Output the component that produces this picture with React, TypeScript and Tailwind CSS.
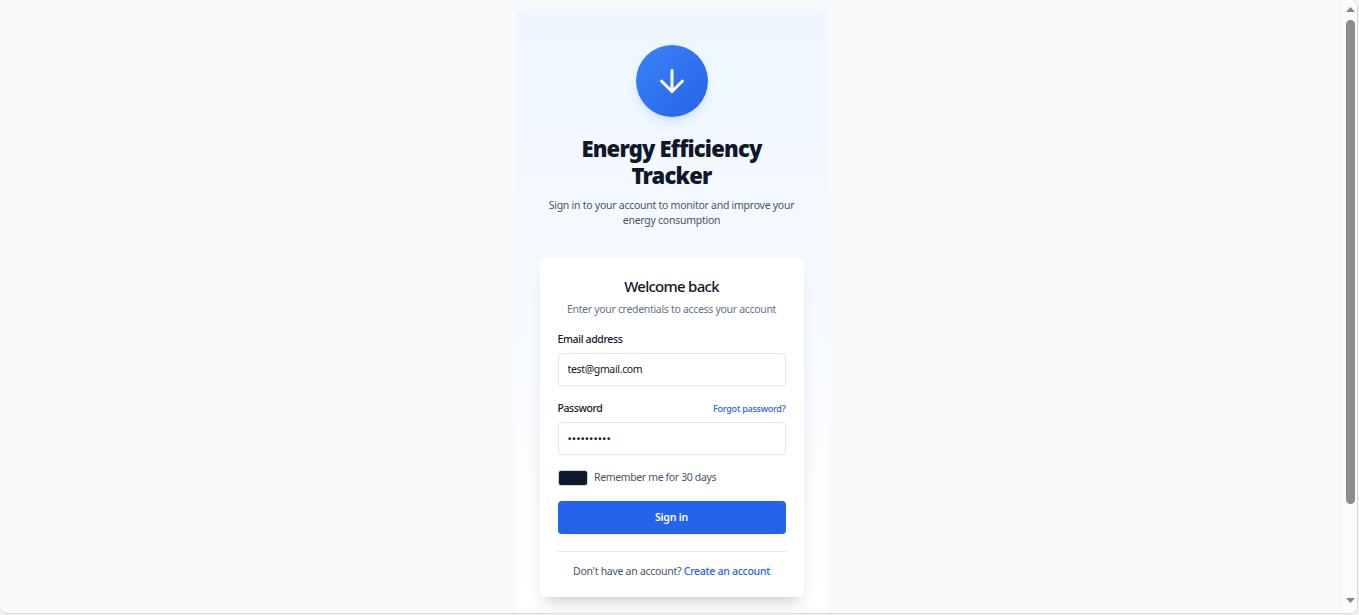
import { ArrowDown } from "lucide-react";

export default function App() {
  return (
    <div className="h-[615px] w-full overflow-hidden bg-[#f1f1f2] font-['Noto_Sans','Open_Sans',sans-serif] antialiased">
      <div className="flex h-[614px] w-[1358px] overflow-hidden rounded-tr-lg rounded-b-lg border-r border-b border-[#d8d9da] bg-[#f8fafc]">
        <main className="flex flex-1 justify-center pt-[9px]">
          <div className="h-[700px] w-[312px] shrink-0 bg-linear-to-b from-[#eff6ff] to-white to-[600px] px-6 pt-9">
            <header className="flex flex-col items-center text-center">
              <div className="flex size-[72px] items-center justify-center rounded-full bg-linear-to-br from-[#3b82f6] to-[#2563eb] shadow-[0_7px_11px_-2px_rgba(59,130,246,0.16),0_3px_5px_-3px_rgba(59,130,246,0.16)]">
                <ArrowDown className="size-9 text-white" strokeWidth={2} />
              </div>
              <h1 className="mt-[18px] text-[22px] leading-[27px] font-black tracking-[-0.8px] text-[#0f172a]">
                Energy Efficiency
                <br />
                Tracker
              </h1>
              <p className="mt-[9px] text-[10.5px] leading-[15px] tracking-[-0.26px] whitespace-nowrap text-[#475569]">
                Sign in to your account to monitor and improve your
                <br />
                energy consumption
              </p>
            </header>

            <section className="mt-[30px] h-[339px] rounded-md bg-white px-[18px] pt-[18px] shadow-[0_15px_19px_-4px_rgba(0,0,0,0.1),0_6px_8px_-5px_rgba(0,0,0,0.1)]">
              <h2 className="text-center text-[15px] leading-[21px] font-medium tracking-[-0.73px] text-[#0f172a]">
                Welcome back
              </h2>
              <p className="mt-[5px] text-center text-[10.5px] leading-[15px] tracking-[-0.31px] whitespace-nowrap text-[#64748b]">
                Enter your credentials to access your account
              </p>
              <form onSubmit={(e) => e.preventDefault()}>
                <label htmlFor="email" className="mt-[15px] block text-[10.5px] leading-[15px] font-medium tracking-[-0.36px] text-[#0f172a]">
                  Email address
                </label>
                <input
                  id="email"
                  type="email"
                  defaultValue="test@gmail.com"
                  className="mt-[6px] block h-[33px] w-full rounded-[4px] border border-[#e2e8f0] bg-white px-[9px] pb-[2px] text-[10.5px] tracking-[-0.34px] text-[#0f172a] shadow-[0_1px_2px_rgba(0,0,0,0.04)]"
                />
                <div className="mt-[15px] flex h-[15px] items-center justify-between">
                  <label htmlFor="password" className="text-[10.5px] font-medium tracking-[-0.42px] text-[#0f172a]">
                    Password
                  </label>
                  <a href="#" className="text-[9px] font-medium tracking-[-0.24px] text-[#2563eb]">
                    Forgot password?
                  </a>
                </div>
                <input
                  id="password"
                  type="password"
                  defaultValue="abcdefghij"
                  className="mt-[6px] block h-[33px] w-full rounded-[4px] border border-[#e2e8f0] bg-white px-[9px] text-[11.5px] text-[#0f172a] shadow-[0_1px_2px_rgba(0,0,0,0.04)]"
                />
                <div className="mt-[15px] flex h-[16px] items-center gap-[6.5px]">
                  <button type="button" aria-label="Remember me" className="h-4 w-[30px] rounded-[3px] border border-[#cbd5e1] bg-[#0f172a]" />
                  <span className="pb-[2px] text-[10.5px] leading-[15px] tracking-[-0.36px] text-[#475569]">Remember me for 30 days</span>
                </div>
                <button type="submit" className="mt-[15px] flex h-[33px] w-full items-center justify-center rounded-[4px] bg-[#2563eb] text-[10.5px] font-semibold tracking-[-0.2px] text-white shadow-[0_1px_2px_rgba(0,0,0,0.08)]">
                  Sign in
                </button>
              </form>
              <div className="mt-[17px] border-t border-[#e2e8f0] pt-[12px] text-center text-[10.5px] leading-[15px] tracking-[-0.28px] whitespace-nowrap text-[#475569]">
                Don't have an account?{" "}
                <a href="#" className="font-medium text-[#2563eb]">Create an account</a>
              </div>
            </section>
          </div>
        </main>
        <aside className="flex w-[14px] flex-col items-center bg-[#fcfcfc] pt-[7px] pb-[10px]">
          <svg className="h-[5px] w-[9px]" viewBox="0 0 9 5" fill="#858585"><path d="M4.5 0 9 5H0Z" /></svg>
          <div className="mt-2 h-[484px] w-[9px] rounded-full bg-[#8b8b8b]" />
          <svg className="mt-auto h-[5px] w-[9px]" viewBox="0 0 9 5" fill="#858585"><path d="M0 0h9L4.5 5Z" /></svg>
        </aside>
      </div>
    </div>
  );
}
